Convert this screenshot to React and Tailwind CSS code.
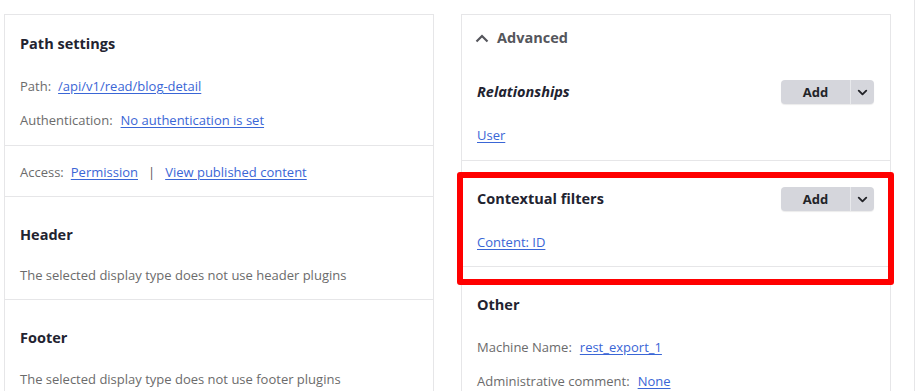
import { FiChevronDown } from "react-icons/fi";

const font = { fontFamily: '"Open Sans", "Noto Sans", Arial, sans-serif' };

const Label = ({ children }) => <span className="text-[#6b6b6b]">{children}</span>;

const Link = ({ children, className = "" }) => (
  <a href="#" className={`text-[#3a66d6] underline underline-offset-2 ${className}`}>
    {children}
  </a>
);

const AddButton = () => (
  <div className="flex h-6 w-[93px] overflow-hidden rounded-[4px] bg-[#d5d6dc] shadow-[0_1px_1px_rgba(0,0,0,0.08)]">
    <span className="flex w-[69px] items-center justify-center text-[13px] font-bold text-[#232429]">
      Add
    </span>
    <span className="flex flex-1 items-center justify-center border-l border-[#e8e9ec] text-[#232429]">
      <FiChevronDown className="text-[15px]" strokeWidth={3} />
    </span>
  </div>
);

export default function App() {
  return (
    <div className="flex h-[391px] overflow-hidden bg-white pl-1 pt-[14px] text-[13px] leading-5" style={font}>
      {/* Left column */}
      <div className="w-[430px] shrink-0 border border-b-0 border-[#e6e6e8]">
        <section className="border-b border-[#e6e6e8] pl-[15px] pr-4 pt-[19px] pb-[15px]">
          <h2 className="text-[14.5px] font-bold text-[#222330]">Path settings</h2>
          <p className="mt-[22px]">
            <Label>Path:</Label>
            <Link className="ml-[7px]">/api/v1/read/blog-detail</Link>
          </p>
          <p className="mt-[14px]">
            <Label>Authentication:</Label>
            <Link className="ml-2">No authentication is set</Link>
          </p>
        </section>
        <section className="border-b border-[#e6e6e8] pl-[15px] pr-4 pt-4 pb-[14px]">
          <p>
            <Label>Access:</Label>
            <Link className="ml-[7px]">Permission</Link>
            <span className="mx-[10px] text-[#555]">|</span>
            <Link>View published content</Link>
          </p>
        </section>
        <section className="border-b border-[#e6e6e8] pl-[15px] pr-4 pt-7 pb-[14px]">
          <h2 className="text-[14.5px] font-bold text-[#222330]">Header</h2>
          <p className="mt-5 text-[#6b6b6b]">The selected display type does not use header plugins</p>
        </section>
        <section className="pl-[15px] pr-4 pt-7">
          <h2 className="text-[14.5px] font-bold text-[#222330]">Footer</h2>
          <p className="mt-[21px] text-[#6b6b6b]">The selected display type does not use footer plugins</p>
        </section>
      </div>

      {/* Right column */}
      <div className="relative ml-[27px] w-[430px] shrink-0 border border-b-0 border-[#e6e6e8]">
        <section className="border-b border-[#e6e6e8] pl-[15px] pr-4 pt-[13px] pb-[15px]">
          <div className="flex items-center text-[#55565c]">
            <svg width="14" height="9" viewBox="0 0 14 9" className="-ml-[2px]">
              <polyline points="1.5,7.5 7,2 12.5,7.5" fill="none" stroke="currentColor" strokeWidth="2.2" />
            </svg>
            <span className="ml-[8px] text-[14.5px] font-bold">Advanced</span>
          </div>
          <div className="mt-8 flex items-center justify-between">
            <h3 className="text-[14.5px] font-bold italic text-[#222330]">Relationships</h3>
            <AddButton />
          </div>
          <p className="mt-[21px]">
            <Link>User</Link>
          </p>
        </section>
        <section className="border-b border-[#e6e6e8] pl-[15px] pr-4 pt-[26px] pb-[14px]">
          <div className="flex items-center justify-between">
            <h3 className="text-[14.5px] font-bold text-[#222330]">Contextual filters</h3>
            <AddButton />
          </div>
          <p className="mt-[21px]">
            <Link>Content: ID</Link>
          </p>
        </section>
        <section className="pl-[15px] pr-4 pt-7">
          <h3 className="text-[14.5px] font-bold text-[#222330]">Other</h3>
          <p className="mt-[22px]">
            <Label>Machine Name:</Label>
            <Link className="ml-2">rest_export_1</Link>
          </p>
          <p className="mt-[14px]">
            <Label>Administrative comment:</Label>
            <Link className="ml-2">None</Link>
          </p>
        </section>

        {/* Highlight box */}
        <div className="pointer-events-none absolute left-[-5px] top-[157px] h-[113px] w-[437px] rounded-[3px] border-[6px] border-[#ff0000]" />
      </div>

      {/* Edge of next column */}
      <div className="ml-[23px] -mt-[14px] flex-1 border-l border-[#e6e6e8]" />
    </div>
  );
}
